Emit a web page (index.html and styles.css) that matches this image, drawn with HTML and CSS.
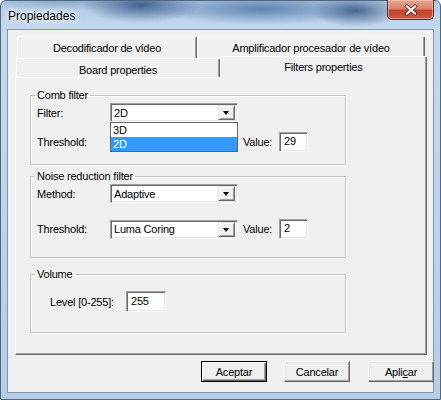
FILE: index.html
```html
<!DOCTYPE html>
<html lang="es">
<head>
    <meta charset="UTF-8">
    <title>Propiedades</title>
    <link rel="stylesheet" href="styles.css">
</head>
<body>

    <div class="window">
        <div class="titlebar">
            <span class="title">Propiedades</span>
            <div class="close-btn">
                <svg width="14" height="12" viewBox="0 0 14 12">
                    <path d="M3 2.5 L11 9.5 M11 2.5 L3 9.5" stroke="#3b2a26" stroke-width="4" stroke-linecap="square" opacity="0.7"/>
                    <path d="M3 2.5 L11 9.5 M11 2.5 L3 9.5" stroke="#ffffff" stroke-width="2" stroke-linecap="square"/>
                </svg>
            </div>
        </div>

        <div class="client">
            <div class="tabs">
                <div class="tab-row back">
                    <div class="tab tab-deco">Decodificador de vídeo</div>
                    <div class="tab tab-ampl">Amplificador procesador de vídeo</div>
                </div>
                <div class="tab-row front">
                    <div class="tab tab-board">Board properties</div>
                    <div class="tab tab-filters selected">Filters properties</div>
                </div>

                <div class="page">
                    <fieldset class="group group-comb">
                        <legend>Comb filter</legend>
                        <div class="row">
                            <span class="lbl">Filter:</span>
                            <div class="combo">
                                <span class="combo-text">2D</span>
                                <span class="combo-btn"></span>
                                <ul class="combo-list">
                                    <li>3D</li>
                                    <li class="sel">2D</li>
                                </ul>
                            </div>
                        </div>
                        <div class="row row-gap-small">
                            <span class="lbl">Threshold:</span>
                            <div class="combo">
                                <span class="combo-text"></span>
                                <span class="combo-btn"></span>
                            </div>
                            <span class="value-lbl">Value:</span>
                            <div class="edit">29</div>
                        </div>
                    </fieldset>

                    <fieldset class="group group-noise">
                        <legend>Noise reduction filter</legend>
                        <div class="row">
                            <span class="lbl">Method:</span>
                            <div class="combo">
                                <span class="combo-text">Adaptive</span>
                                <span class="combo-btn"></span>
                            </div>
                        </div>
                        <div class="row row-gap-large">
                            <span class="lbl">Threshold:</span>
                            <div class="combo">
                                <span class="combo-text">Luma Coring</span>
                                <span class="combo-btn"></span>
                            </div>
                            <span class="value-lbl">Value:</span>
                            <div class="edit">2</div>
                        </div>
                    </fieldset>

                    <fieldset class="group group-volume">
                        <legend>Volume</legend>
                        <div class="row">
                            <span class="lbl-level">Level [0-255]:</span>
                            <div class="edit edit-level">255</div>
                        </div>
                    </fieldset>
                </div>
            </div>

            <div class="buttons">
                <div class="btn default">Aceptar</div>
                <div class="btn">Cancelar</div>
                <div class="btn btn-last">Apli<u>c</u>ar</div>
            </div>
        </div>
    </div>

</body>
</html>
```

FILE: styles.css
```css
/* Basic reset */
* {
    margin: 0;
    padding: 0;
    box-sizing: border-box;
}

body {
    font-family: 'Liberation Sans', Arial, sans-serif;
    font-size: 11px;
    letter-spacing: -0.2px;
    color: #000;
    width: 441px;
    height: 400px;
    overflow: hidden;
    background: #ffffff;
}

/* Window frame (aero style) */
.window {
    width: 441px;
    height: 400px;
    display: flex;
    flex-direction: column;
    border: 1px solid #51667f;
    border-radius: 6px 6px 0 0;
    padding: 0 6px 6px 6px;
    background:
        radial-gradient(ellipse 60px 18px at 140px 4px, rgba(25, 60, 115, 0.75), transparent),
        radial-gradient(ellipse 110px 16px at 260px 8px, rgba(35, 80, 140, 0.6), transparent),
        radial-gradient(ellipse 45px 16px at 355px 10px, rgba(25, 60, 110, 0.7), transparent),
        radial-gradient(ellipse 80px 10px at 60px 0, rgba(60, 100, 150, 0.35), transparent),
        linear-gradient(to bottom, #b4cce6 0, #c5d9ee 30px, #bed4ec 200px, #b6cde6 100%);
}

.titlebar {
    height: 28px;
    display: flex;
    justify-content: space-between;
    align-items: center;
    padding-left: 1px;
}

.title {
    font-size: 12px;
    letter-spacing: 0;
    margin-top: 2px;
    text-shadow: 0 0 6px #ffffff, 0 0 3px #ffffff, 0 0 10px #ffffff;
}

.close-btn {
    align-self: flex-start;
    margin-top: -1px;
    width: 47px;
    height: 20px;
    border: 1px solid #5b2d25;
    border-top: none;
    border-radius: 0 0 5px 5px;
    display: flex;
    align-items: center;
    justify-content: center;
    background: linear-gradient(to bottom, #e4a493 0, #d9826d 45%, #c4412c 55%, #c85a3e 100%);
    box-shadow: inset 0 0 0 1px rgba(255, 210, 195, 0.55);
}

/* Client area */
.client {
    flex: 1;
    background: #f0f0f0;
    border: 1px solid #8196b0;
    padding: 6px 5px 10px 7px;
    display: flex;
    flex-direction: column;
}

/* Tab control */
.tab-row {
    display: flex;
}

.tab-row.back {
    height: 22px;
    padding-left: 2px;
}

.tab-row.front {
    height: 19px;
    padding-left: 1px;
}

.tab {
    background: #f0f0f0;
    border-top: 1px solid #ffffff;
    border-left: 1px solid #ffffff;
    border-right: 1px solid #696969;
    box-shadow: inset -1px 0 0 #a0a0a0;
    border-radius: 2px 2px 0 0;
    display: flex;
    align-items: center;
    justify-content: center;
    white-space: nowrap;
}

.tab-deco {
    width: 180px;
    padding-top: 1px;
}

.tab-ampl {
    width: 228px;
    padding-top: 1px;
}

.tab-board {
    width: 204px;
    padding-top: 3px;
}

.tab-filters.selected {
    width: 207px;
    height: 22px;
    margin-top: -2px;
    position: relative;
    z-index: 2;
    padding-bottom: 1px;
}

.page {
    height: 278px;
    width: 412px;
    background: #f0f0f0;
    border-top: 1px solid #ffffff;
    border-left: 1px solid #ffffff;
    border-right: 1px solid #696969;
    border-bottom: 1px solid #696969;
    box-shadow: inset -1px -1px 0 #a0a0a0;
    padding: 0 0 0 14px;
}

/* Group boxes */
.group {
    width: 316px;
    border: 1px solid #c4c4c4;
    box-shadow: inset 1px 1px 0 #ffffff, 1px 1px 0 #ffffff;
    padding: 1px 0 0 6px;
}

.group legend {
    padding: 0 2px;
    margin-left: -2px;
    line-height: 13px;
}

.group-comb {
    margin-top: 11px;
    padding-bottom: 12px;
}

.group-noise {
    margin-top: 5px;
    padding-bottom: 18px;
}

.group-volume {
    margin-top: 10px;
    padding-top: 10px;
    padding-bottom: 20px;
}

.row {
    display: flex;
    align-items: center;
}

.row-gap-small {
    margin-top: 10px;
}

.row-gap-large {
    margin-top: 16px;
}

.lbl {
    width: 73px;
}

.lbl-level {
    margin-left: 13px;
    width: 76px;
}

.value-lbl {
    margin-left: 5px;
    width: 36px;
}

/* Combo box */
.combo {
    position: relative;
    width: 128px;
    height: 19px;
    background: #ffffff;
    border: 1px solid;
    border-color: #a0a0a0 #ffffff #ffffff #a0a0a0;
    box-shadow: inset 1px 1px 0 #696969, inset -1px -1px 0 #e3e3e3;
    display: flex;
    align-items: center;
    padding: 1px 2px 1px 1px;
}

.combo-text {
    flex: 1;
    padding-left: 2px;
    white-space: nowrap;
}

.combo-btn {
    position: relative;
    width: 17px;
    height: 15px;
    background: #f0f0f0;
    border: 1px solid;
    border-color: #e3e3e3 #696969 #696969 #e3e3e3;
    box-shadow: inset 1px 1px 0 #ffffff, inset -1px -1px 0 #a0a0a0;
}

.combo-btn::after {
    content: '';
    position: absolute;
    left: 4px;
    top: 5px;
    border-left: 3.5px solid transparent;
    border-right: 3.5px solid transparent;
    border-top: 4px solid #000000;
}

.combo-list {
    list-style: none;
    position: absolute;
    top: 18px;
    left: -1px;
    width: 128px;
    background: #ffffff;
    border: 1px solid #646464;
    z-index: 5;
}

.combo-list li {
    height: 14px;
    line-height: 14px;
    padding-left: 2px;
}

.combo-list li.sel {
    background: #3399ff;
    color: #ffffff;
}

/* Edit box */
.edit {
    width: 29px;
    height: 20px;
    background: #ffffff;
    border: 1px solid;
    border-color: #a0a0a0 #ffffff #ffffff #a0a0a0;
    box-shadow: inset 1px 1px 0 #696969, inset -1px -1px 0 #e3e3e3;
    padding: 2px 0 0 4px;
}

.edit-level {
    width: 40px;
    height: 21px;
    padding-top: 3px;
}

/* Dialog buttons */
.buttons {
    display: flex;
    justify-content: flex-end;
    gap: 17px;
    margin-top: 6px;
    width: 419px;
}

.btn {
    width: 66px;
    height: 21px;
    display: flex;
    align-items: center;
    justify-content: center;
    background: #f0f0f0;
    border: 1px solid;
    border-color: #ffffff #696969 #696969 #ffffff;
    box-shadow: inset -1px -1px 0 #a0a0a0, inset 1px 1px 0 #e3e3e3;
}

.btn.default {
    border: 1px solid #000000;
    box-shadow: inset 1px 1px 0 #ffffff, inset -1px -1px 0 #696969, inset -2px -2px 0 #a0a0a0;
}

.btn-last {
    margin-left: 1px;
}
```
